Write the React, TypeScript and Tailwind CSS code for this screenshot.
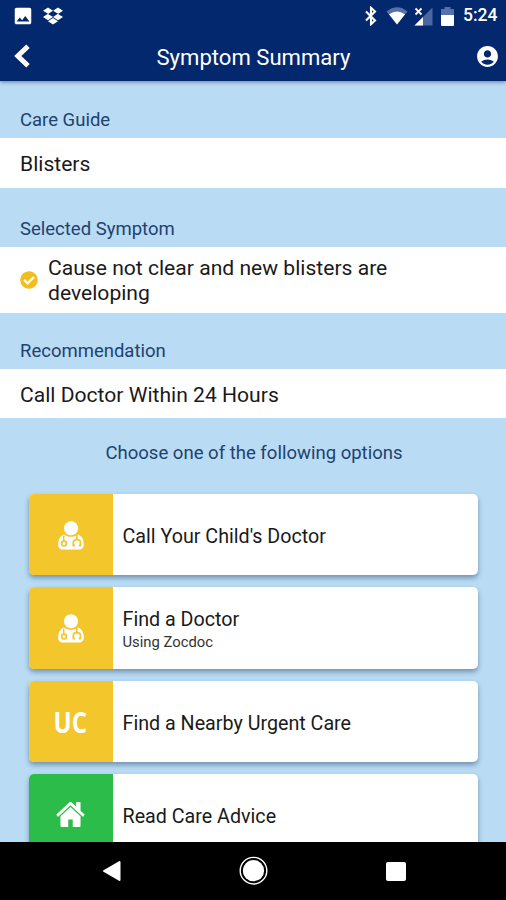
import * as React from 'react';
import { FaCheckCircle, FaDropbox } from 'react-icons/fa';
import { MdAccountCircle, MdImage } from 'react-icons/md';

function DoctorIcon(): React.ReactElement {
  return (
    <svg viewBox="0 0 26 29" className="mt-[2px] w-[26px] h-[29px]" fill="none">
      <circle cx="13" cy="7.2" r="7" fill="white" />
      <path
        d="M6 13.5C2.2 14.8 0.2 18.5 0.2 23.5C0.2 27 2 28.5 5 28.5H21C24 28.5 25.8 27 25.8 23.5C25.8 18.5 23.8 14.8 20 13.5C16 16.6 10 16.6 6 13.5Z"
        fill="white"
      />
      <path d="M5.7 14.5V20.5" stroke="#f3c62b" strokeWidth="1.5" />
      <circle cx="6" cy="22.6" r="2.4" stroke="#f3c62b" strokeWidth="1.7" />
      <path d="M18.8 14V18.5M15.3 24.5V21.5C15.3 17.6 22.5 17.6 22.5 21.5V24.5" stroke="#f3c62b" strokeWidth="1.7" />
      <circle cx="15.8" cy="24.4" r="1.2" fill="#f3c62b" />
      <circle cx="22" cy="24.4" r="1.2" fill="#f3c62b" />
    </svg>
  );
}

function HomeIcon(): React.ReactElement {
  return (
    <svg viewBox="0 253 1664 1283" className="w-[29px] h-[25px]" preserveAspectRatio="none" fill="white">
      <path d="M1408 992v480q0 26-19 45t-45 19H960v-384H704v384H320q-26 0-45-19t-19-45V992q0-1 .5-3t.5-3l575-474 575 474q1 2 1 6zm223-69l-62 74q-8 9-21 11h-3q-13 0-21-7L832 424 140 1001q-12 8-24 7-13-2-21-11l-62-74q-8-10-7-23.5T37 878l719-599q32-26 76-26t76 26l244 204V288q0-14 9-23t23-9h192q14 0 23 9t9 23v408l219 182q10 8 11 21.5t-7 23.5z" />
    </svg>
  );
}

function StatusBar(): React.ReactElement {
  return (
    <div className="h-8 flex items-center justify-between pl-3 pr-[9px]">
      <div className="flex items-center gap-[9px]">
        <MdImage className="w-[22px] h-[22px]" />
        <FaDropbox className="w-5 h-5" />
      </div>
      <div className="flex items-center">
        <svg viewBox="0 0 12 20" className="w-3 h-5" fill="none">
          <path d="M1 5.5L10 14.5L6 18.2V1.8L10 5.5L1 14.5" stroke="white" strokeWidth="2.1" />
        </svg>
        <svg viewBox="0 0 22 18" className="ml-[9px] w-[22px] h-[18px]">
          <path d="M0.5 4.5Q11-4 21.5 4.5L11 17.5Z" fill="#5571a8" />
          <path d="M3 7.2Q11 1.8 19 7.2L11 17.5Z" fill="white" />
        </svg>
        <svg viewBox="0 0 19 19" className="ml-[6px] w-[19px] h-[19px]">
          <path d="M18.5 0.5V18.5H0.5Z" fill="#4b67a2" />
          <path d="M9 10V18.5H0.5Z" fill="white" />
          <path d="M1.5 1.5L7.5 7.5M7.5 1.5L1.5 7.5" stroke="white" strokeWidth="1.8" />
        </svg>
        <svg viewBox="0 0 13 19" className="ml-[8px] w-[13px] h-[19px]">
          <path d="M3.5 0H9.5V2H13V8H0V2H3.5Z" fill="#5571a8" />
          <path d="M0 8H13V18Q13 19 12 19H1Q0 19 0 18Z" fill="white" />
        </svg>
        <span className="ml-[9px] w-[34px] text-[17.5px] leading-none font-medium whitespace-nowrap">5:24</span>
      </div>
    </div>
  );
}

function Header(): React.ReactElement {
  return (
    <header className="relative z-10 h-[81px] shrink-0 bg-[#03286e] text-white shadow-[0_1px_4px_rgba(0,0,60,0.45)]">
      <StatusBar />
      <div className="h-[49px] flex items-center justify-between pl-[14px] pr-[6px]">
        <button className="w-[26px]">
          <svg viewBox="0 0 17 24" className="mb-[2px] w-[17px] h-6" fill="none">
            <path d="M14 2.2L3.8 12L14 21.8" stroke="white" strokeWidth="5" />
          </svg>
        </button>
        <h1 className="text-[22.1px] leading-7 pr-[8px]">Symptom Summary</h1>
        <button>
          <MdAccountCircle className="w-[25px] h-[25px]" />
        </button>
      </div>
    </header>
  );
}

interface LabelProps {
  className: string;
  children: React.ReactNode;
}

function SectionLabel({ className, children }: LabelProps): React.ReactElement {
  return (
    <h2 className={`flex items-end px-5 pb-[6px] text-[18.5px] leading-6 text-[#1f426f] ${className}`}>{children}</h2>
  );
}

const options = [
  { title: 'Call Your Child\'s Doctor', icon: <DoctorIcon />, color: 'bg-[#f3c62b]' },
  { title: 'Find a Doctor', subtitle: 'Using Zocdoc', icon: <DoctorIcon />, color: 'bg-[#f3c62b]' },
  {
    title: 'Find a Nearby Urgent Care',
    icon: (
      <span className="font-['Open_Sans'] text-[29px] font-bold leading-none text-white scale-x-[0.83]">UC</span>
    ),
    color: 'bg-[#f3c62b]'
  },
  { title: 'Read Care Advice', icon: <HomeIcon />, color: 'bg-[#2cbc49]' }
];

function NavBar(): React.ReactElement {
  return (
    <nav className="relative z-10 h-[58px] shrink-0 bg-black flex items-center justify-between pl-[102px] pr-[100px]">
      <svg viewBox="0 0 20 22" className="w-5 h-[22px]">
        <path d="M17.5 2V20L2 11Z" fill="white" stroke="white" strokeWidth="2" strokeLinejoin="round" />
      </svg>
      <svg viewBox="0 0 30 30" className="w-[30px] h-[30px]">
        <circle cx="14.5" cy="14.7" r="13.3" fill="none" stroke="white" strokeWidth="1.4" />
        <circle cx="14.5" cy="14.7" r="10.6" fill="white" />
      </svg>
      <div className="w-5 h-[19px] rounded-[2px] bg-white mt-px" />
    </nav>
  );
}

export default function App(): React.ReactElement {
  return (
    <div className="w-full h-[900px] flex flex-col overflow-hidden bg-[#b9dbf4] font-[Roboto,sans-serif] text-[#1a1a1a]">
      <Header />
      <main className="flex-1 min-h-0 overflow-hidden text-[21.1px] leading-[25px]">
        <SectionLabel className="h-[57px]">Care Guide</SectionLabel>
        <div className="h-[50px] bg-white px-5 pt-px flex items-center">Blisters</div>
        <SectionLabel className="h-[59px]">Selected Symptom</SectionLabel>
        <div className="h-[66px] bg-white px-5 flex items-center gap-[10px]">
          <FaCheckCircle className="w-[18px] h-[18px] shrink-0 text-[#f0bf1f]" />
          <p className="w-[370px]">Cause not clear and new blisters are developing</p>
        </div>
        <SectionLabel className="h-[56px]">Recommendation</SectionLabel>
        <div className="h-[49px] bg-white px-5 pt-px flex items-center">Call Doctor Within 24 Hours</div>
        <p className="h-[75.5px] pt-[23px] pl-[2px] text-center text-[18.55px] text-[#1f426f]">
          Choose one of the following options
        </p>
        <ul className="pl-[28.5px] pr-[28px] space-y-3">
          {options.map(option => (
            <li
              key={option.title}
              className="h-[81.5px] flex overflow-hidden rounded-[5px] bg-white shadow-[0_3px_5px_rgba(30,60,90,0.45)]"
            >
              <div className={`w-[84px] shrink-0 flex items-center justify-center ${option.color}`}>
                {option.icon}
              </div>
              <div className="pl-[10px] pt-[4px] flex flex-col justify-center text-[19.7px]">
                <span>{option.title}</span>
                {option.subtitle && <span className="text-[14.8px] leading-5 text-[#333]">{option.subtitle}</span>}
              </div>
            </li>
          ))}
        </ul>
      </main>
      <NavBar />
    </div>
  );
}
